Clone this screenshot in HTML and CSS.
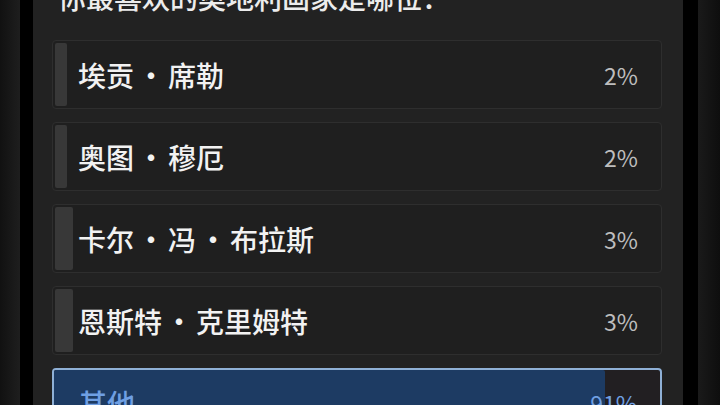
FILE: index.html
```html
<!DOCTYPE html>
<html lang="zh-CN">
<head>
<meta charset="utf-8">
<link rel="stylesheet" href="styles.css">
</head>
<body>
<div class="screen">
  <div class="edge-left"></div>
  <div class="gutter"></div>
  <main class="panel">
    <h1 class="question">你最喜欢的奥地利画家是哪位：</h1>
    <ul class="options">
      <li class="option">
        <div class="bar" style="width:2%"></div>
        <span class="label">埃贡<span class="dot">·</span>席勒</span>
        <span class="pct">2%</span>
      </li>
      <li class="option">
        <div class="bar" style="width:2%"></div>
        <span class="label">奥图<span class="dot">·</span>穆厄</span>
        <span class="pct">2%</span>
      </li>
      <li class="option">
        <div class="bar" style="width:3%"></div>
        <span class="label">卡尔<span class="dot">·</span>冯<span class="dot">·</span>布拉斯</span>
        <span class="pct">3%</span>
      </li>
      <li class="option">
        <div class="bar" style="width:3%"></div>
        <span class="label">恩斯特<span class="dot">·</span>克里姆特</span>
        <span class="pct">3%</span>
      </li>
      <li class="option selected">
        <div class="bar" style="width:91%"></div>
        <span class="label">其他</span>
        <span class="pct">91%</span>
      </li>
    </ul>
  </main>
  <div class="gutter gutter-right"></div>
  <div class="edge-right"></div>
</div>
</body>
</html>
```
FILE: styles.css
```css
* { box-sizing: border-box; }
html, body {
  margin: 0;
  padding: 0;
  width: 720px;
  height: 405px;
  overflow: hidden;
  background: #000;
  font-family: "Noto Sans CJK SC", "Noto Sans", sans-serif;
}
.screen {
  display: flex;
  width: 720px;
  height: 405px;
}
.edge-left {
  width: 20px;
  background: linear-gradient(90deg, #111 0%, #1e1e1e 100%);
}
.gutter {
  width: 13px;
  background: #000;
}
.gutter-right { width: 15px; }
.edge-right {
  width: 22px;
  background: linear-gradient(90deg, #1a1a1a 0%, #0e0e0e 100%);
}
.panel {
  width: 650px;
  background: #222;
  padding: 0 21px 0 19px;
  overflow: hidden;
}
.question {
  margin: -23px 0 0 6px;
  font-size: 28px;
  font-weight: 500;
  line-height: 40px;
  color: #ececec;
}
.options {
  list-style: none;
  margin: 23px 0 0 0;
  padding: 0;
  display: flex;
  flex-direction: column;
  gap: 13px;
}
.option {
  position: relative;
  height: 69px;
  border: 1px solid #2e2e2e;
  border-radius: 4px;
  background: #1f1f1f;
  padding: 2px;
  display: flex;
  align-items: center;
  justify-content: space-between;
}
.bar {
  position: absolute;
  left: 2px;
  top: 2px;
  bottom: 2px;
  background: #383838;
  border-radius: 2px;
}
.label, .pct {
  position: relative;
}
.label {
  margin-left: 23px;
  font-size: 28px;
  font-weight: 500;
  color: #f2f2f2;
}
.dot {
  display: inline-block;
  width: 34px;
  text-align: center;
}
.pct {
  margin-right: 21px;
  font-size: 23px;
  color: #bdbdbd;
}
.selected {
  border: 2px solid #8fb0d6;
  background: #221f22;
}
.selected .bar {
  left: 0;
  top: 0;
  bottom: 0;
  background: #1d3b63;
}
.selected .label, .selected .pct {
  color: #6f9fe2;
}
```
